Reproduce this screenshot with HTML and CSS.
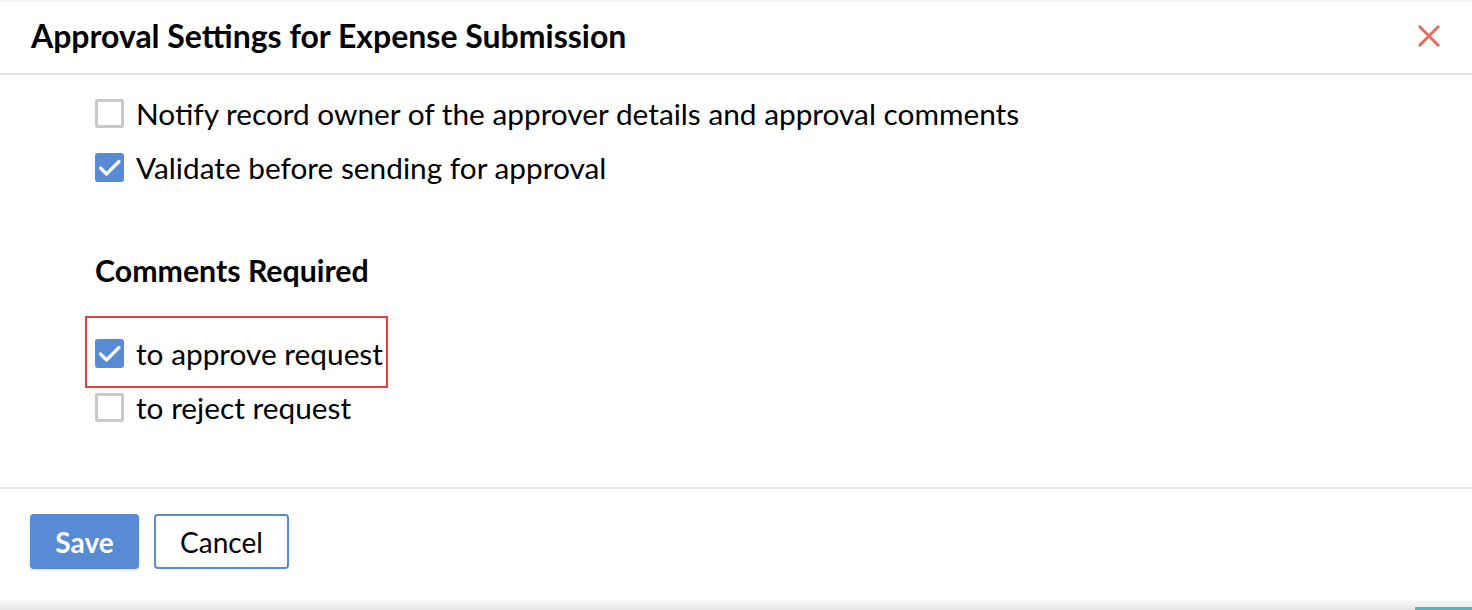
FILE: index.html
```html
<!DOCTYPE html>
<html>
<head>
<meta charset="utf-8">
<link rel="stylesheet" href="styles.css">
</head>
<body>
<div class="dialog">
  <div class="header">
    <h1 class="title">Approval Settings for Expense Submission</h1>
    <button class="close" aria-label="Close">
      <svg width="24" height="24" viewBox="0 0 24 24"><path d="M2 2 L22 22 M22 2 L2 22" stroke="#e06c5c" stroke-width="3" fill="none"/></svg>
    </button>
  </div>
  <div class="content">
    <label class="row"><span class="cb"></span><span class="label">Notify record owner of the approver details and approval comments</span></label>
    <label class="row"><span class="cb checked"><svg viewBox="0 0 29 29" width="29" height="29"><path d="M5.5 15 L11.5 21 L24 8.5" stroke="#fff" stroke-width="3.2" fill="none" stroke-linecap="round" stroke-linejoin="round"/></svg></span><span class="label">Validate before sending for approval</span></label>
    <h2 class="section">Comments Required</h2>
    <label class="row highlighted"><span class="cb checked"><svg viewBox="0 0 29 29" width="29" height="29"><path d="M5.5 15 L11.5 21 L24 8.5" stroke="#fff" stroke-width="3.2" fill="none" stroke-linecap="round" stroke-linejoin="round"/></svg></span><span class="label">to approve request</span></label>
    <label class="row"><span class="cb"></span><span class="label">to reject request</span></label>
  </div>
  <div class="footer">
    <button class="btn btn-primary">Save</button>
    <button class="btn btn-secondary">Cancel</button>
  </div>
</div>
<div class="shadow-strip"><span class="teal"></span></div>
</body>
</html>
```
FILE: styles.css
```css
html, body {
  margin: 0;
  padding: 0;
  background: #fff;
}
body {
  font-family: Lato, "Open Sans", sans-serif;
  color: #000;
  width: 1472px;
  height: 610px;
  overflow: hidden;
  border-top: 2px solid #f4f4f4;
  box-sizing: border-box;
}
.dialog {
  height: 596px;
  display: flex;
  flex-direction: column;
}
.header {
  height: 71px;
  border-bottom: 2px solid #e2e2e2;
  display: flex;
  align-items: center;
  justify-content: space-between;
  padding: 0 32px 0 31px;
}
.title {
  margin: 0 0 3px 0;
  font-size: 32px;
  font-weight: 700;
  color: #000;
  line-height: 40px;
}
.close {
  border: none;
  background: none;
  padding: 0;
  width: 24px;
  height: 24px;
  cursor: pointer;
  margin: 0 -1px 4px 0;
}
.close svg { display: block; }
.content {
  padding: 11px 0 0 95px;
  display: flex;
  flex-direction: column;
  align-items: flex-start;
  height: 414px;
  box-sizing: border-box;
  border-bottom: 2px solid #e2e2e2;
}
.row {
  height: 54px;
  display: inline-flex;
  align-items: center;
  gap: 12px;
  font-size: 29.8px;
  position: relative;
}
.cb {
  width: 29px;
  height: 29px;
  box-sizing: border-box;
  border: 3px solid #c9c9c9;
  border-radius: 2px;
  display: inline-block;
  flex: none;
}
.cb.checked {
  border: none;
  background: #578bd3;
  border-radius: 3px;
}
.cb svg { display: block; }
.section {
  margin: 56px 0 36px 0;
  font-size: 30.3px;
  font-weight: 700;
  height: 40px;
  line-height: 40px;
}
.highlighted::after {
  content: "";
  position: absolute;
  top: -10px;
  bottom: -8px;
  left: -10px;
  right: -5px;
  border: 2px solid #e5432f;
}
.footer {
  padding: 25px 0 0 30px;
  display: flex;
  gap: 15px;
}
.btn {
  height: 55px;
  font-family: Lato, "Open Sans", sans-serif;
  font-size: 28px;
  border-radius: 4px;
  cursor: pointer;
  padding: 0;
}
.btn-primary {
  width: 109px;
  background: #578bd3;
  color: #fff;
  font-weight: 700;
  border: none;
  box-shadow: 0 1px 3px rgba(0,0,0,0.15);
}
.btn-secondary {
  width: 135px;
  background: #fff;
  color: #000;
  border: 2px solid #578bd3;
}
.shadow-strip {
  height: 12px;
  background: linear-gradient(#ffffff, #e6e6e6);
  position: relative;
}
.teal {
  position: absolute;
  right: 0;
  bottom: 0;
  width: 57px;
  height: 3px;
  background: #5cb5b5;
}
```
